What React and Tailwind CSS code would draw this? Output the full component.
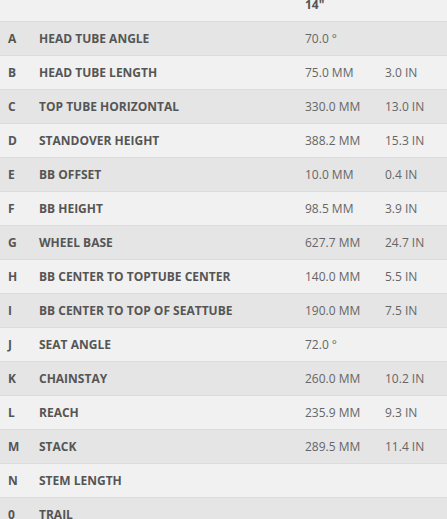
const rows = [
  ['A', 'HEAD TUBE ANGLE', '70.0 °', ''],
  ['B', 'HEAD TUBE LENGTH', '75.0 MM', '3.0 IN'],
  ['C', 'TOP TUBE HORIZONTAL', '330.0 MM', '13.0 IN'],
  ['D', 'STANDOVER HEIGHT', '388.2 MM', '15.3 IN'],
  ['E', 'BB OFFSET', '10.0 MM', '0.4 IN'],
  ['F', 'BB HEIGHT', '98.5 MM', '3.9 IN'],
  ['G', 'WHEEL BASE', '627.7 MM', '24.7 IN'],
  ['H', 'BB CENTER TO TOPTUBE CENTER', '140.0 MM', '5.5 IN'],
  ['I', 'BB CENTER TO TOP OF SEATTUBE', '190.0 MM', '7.5 IN'],
  ['J', 'SEAT ANGLE', '72.0 °', ''],
  ['K', 'CHAINSTAY', '260.0 MM', '10.2 IN'],
  ['L', 'REACH', '235.9 MM', '9.3 IN'],
  ['M', 'STACK', '289.5 MM', '11.4 IN'],
  ['N', 'STEM LENGTH', '', ''],
  ['0', 'TRAIL', '', ''],
];

export default function App() {
  return (
    <div className="h-screen overflow-hidden bg-[#f1f1f1] font-['Open_Sans',sans-serif] text-[12px] text-[#555]">
      <div className="-mt-[12px]">
        {/* Header */}
        <div className="grid h-[34px] grid-cols-[31px_266px_80px_1fr] items-center border-b border-[#dcdcdc] bg-[#f1f1f1] pl-2 font-bold">
          <span />
          <span />
          <span>14"</span>
          <span />
        </div>

        {rows.map(([letter, label, mm, inch], i) => (
          <div
            key={letter + label}
            className={`grid h-[34px] grid-cols-[31px_266px_80px_1fr] items-center border-b border-[#dcdcdc] pl-2 ${
              i % 2 === 0 ? 'bg-[#e5e5e5]' : 'bg-[#f1f1f1]'
            }`}
          >
            <span className="font-bold">{letter}</span>
            <span className="font-bold">{label}</span>
            <span className="text-[#666]">{mm}</span>
            <span className="text-[#666]">{inch}</span>
          </div>
        ))}
      </div>
    </div>
  );
}
